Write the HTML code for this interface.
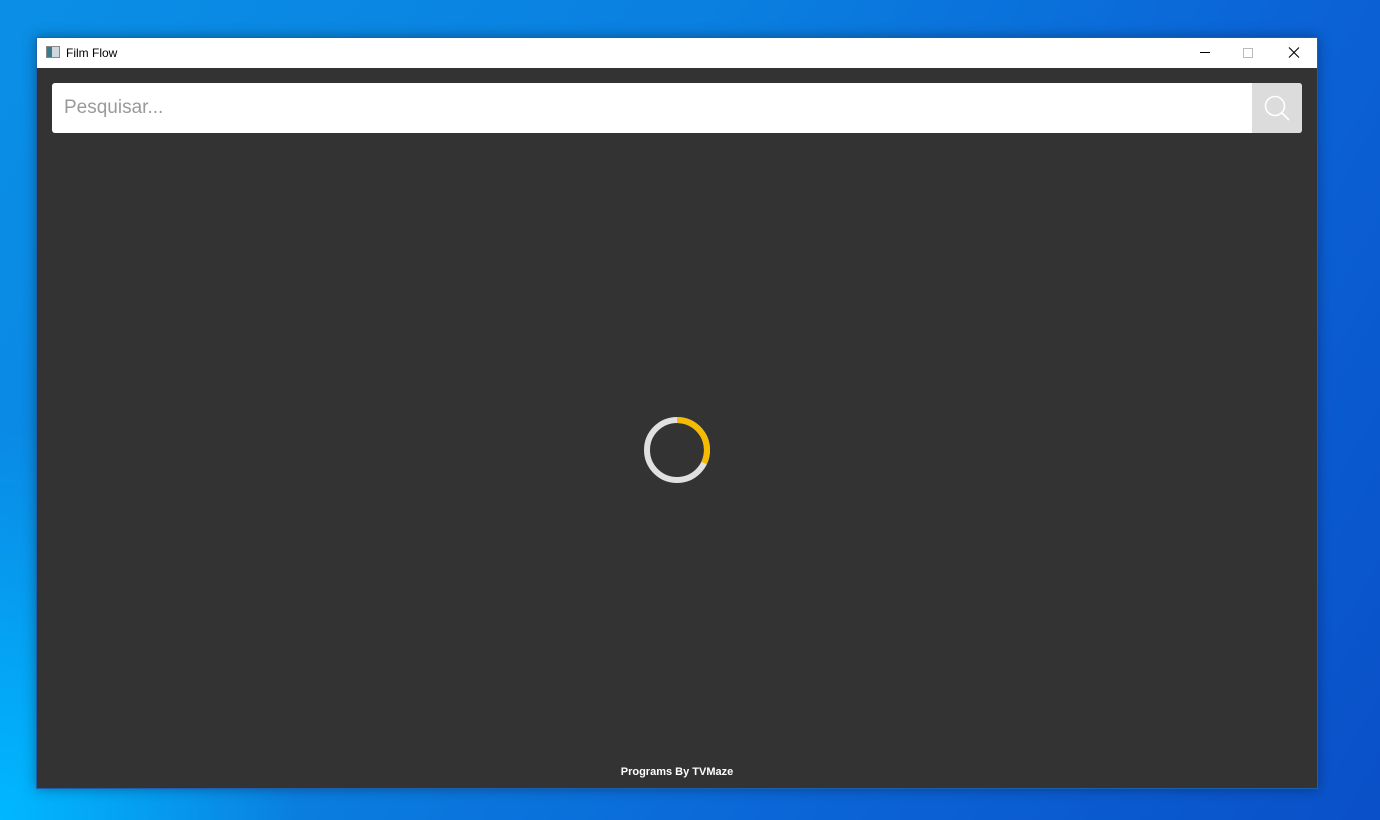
<!DOCTYPE html>
<html><head><style>
*{margin:0;padding:0;box-sizing:border-box}
body{width:1380px;height:820px;overflow:hidden;position:relative;font-family:"Liberation Sans",sans-serif;
background:linear-gradient(120deg,#0a8fe6 0%,#0a7fe0 40%,#0b64d6 70%,#0a50c8 100%);}
.bl{position:absolute;left:0;bottom:0;width:300px;height:400px;background:radial-gradient(ellipse at 0% 100%,#00b8ff 0%,rgba(0,170,255,0) 70%)}
.win{position:absolute;left:36px;top:37px;width:1282px;height:752px;background:#333;border:1px solid #1a5fb0;box-shadow:0 0 12px rgba(0,0,0,.35)}
.tb{height:30px;background:#fff;position:relative;font-size:12px;color:#000}
.tb .t{position:absolute;left:29px;top:8px}
.ic{position:absolute;left:9px;top:8px;width:14px;height:12px;border:1px solid #888;background:linear-gradient(90deg,#3a7a8a 40%,#cfd8dc 40%)}
.search{position:absolute;left:15px;top:45px;width:1250px;height:50px;background:#fff;border-radius:3px;overflow:hidden}
.search span{position:absolute;left:12px;top:14px;font-size:19px;color:#9a9a9a;font-family:"Liberation Sans",sans-serif}
.btn{position:absolute;right:0;top:0;width:50px;height:50px;background:#dcdcdc}
.foot{position:absolute;left:0;width:100%;top:728px;text-align:center;color:#fff;font-weight:bold;font-size:11px;font-family:"Liberation Sans",sans-serif}
</style></head><body>
<div class="bl"></div>
<div class="win">
<div class="tb"><div class="ic"></div><span class="t">Film Flow</span>
<svg style="position:absolute;left:1160px;top:7px" width="120" height="16">
<line x1="3" y1="7.5" x2="13" y2="7.5" stroke="#000" stroke-width="1"/>
<rect x="46.5" y="3.5" width="9" height="9" fill="none" stroke="#bbb"/>
<path d="M92 2.5L102 12.5M102 2.5L92 12.5" stroke="#000" stroke-width="1.1"/>
</svg></div>
<div class="search"><span>Pesquisar...</span><div class="btn">
<svg width="50" height="50"><circle cx="23" cy="23" r="9.5" fill="none" stroke="#fff" stroke-width="1.6"/><line x1="30" y1="30" x2="37" y2="37" stroke="#fff" stroke-width="1.8"/></svg></div></div>
<svg style="position:absolute;left:605px;top:377px" width="70" height="70">
<circle cx="35" cy="35" r="30" fill="none" stroke="#e0e0e0" stroke-width="6"/>
<path d="M35 5 A30 30 0 0 1 62 48" fill="none" stroke="#f5bb00" stroke-width="6"/>
</svg>
<div class="foot">Programs By TVMaze</div>
</div>
</body></html>
